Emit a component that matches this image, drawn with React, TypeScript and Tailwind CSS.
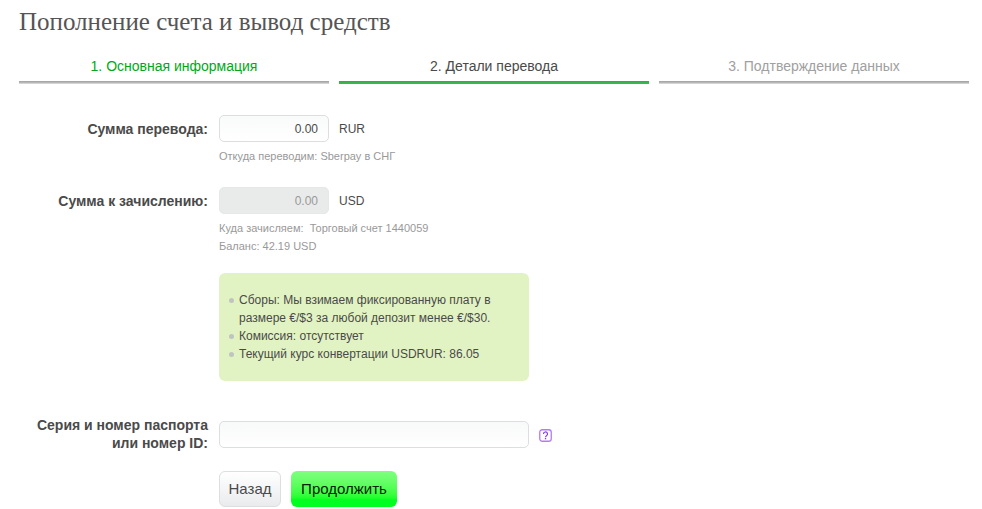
const sans = 'font-["Liberation_Sans",Arial,sans-serif]';

function Step({ label, className, lineClass }: { label: string; className: string; lineClass: string }) {
  return (
    <div className="w-[310px] shrink-0">
      <div className={`h-[29px] text-center text-[14px] leading-[16px] pt-[6px] ${className}`}>{label}</div>
      <div className={`h-[3px] ${lineClass}`} />
    </div>
  );
}

function Label({ children, className = '' }: { children: React.ReactNode; className?: string }) {
  return <div className={`w-[189px] shrink-0 text-right text-[14px] font-bold text-[#4a4a4a] ${className}`}>{children}</div>;
}

function AmountRow({ label, currency, disabled }: { label: string; currency: string; disabled?: boolean }) {
  return (
    <div className="flex items-center">
      <Label className="leading-[16px]">{label}</Label>
      <input
        readOnly
        value="0.00"
        className={`ml-[11px] w-[110px] h-[27px] rounded-[5px] border px-[10px] text-right text-[12px] outline-none ${
          disabled
            ? 'border-[#e6e8e8] bg-[#e9ebeb] text-[#999999]'
            : 'border-[#dcdee0] bg-gradient-to-b from-[#f9fafa] to-white text-[#4a4a4a]'
        }`}
      />
      <span className="ml-[10px] text-[12px] text-[#4a4a4a]">{currency}</span>
    </div>
  );
}

function Fee({ children }: { children: React.ReactNode }) {
  return (
    <li className="flex">
      <span className="mt-[7px] ml-[-10px] mr-[5px] h-[5px] w-[5px] shrink-0 rounded-full bg-[#c0c4c0]" />
      <span>{children}</span>
    </li>
  );
}

export default function App() {
  return (
    <div className={`w-[982px] h-[509px] overflow-hidden bg-white pl-[19px] pr-[13px] ${sans}`}>
      <h1 className='pt-[8px] h-[52px] text-[25px] leading-[28px] font-normal text-[#555555] font-["Liberation_Serif",serif]'>
        Пополнение счета и вывод средств
      </h1>

      <div className="flex gap-[10px]">
        <Step label="1. Основная информация" className="text-[#00a818]" lineClass="bg-gradient-to-b from-[#a8a8a8] from-33% to-[#e4e4e4]" />
        <Step label="2. Детали перевода" className="text-[#4a4a4a]" lineClass="bg-gradient-to-b from-[#28b040] to-[#40b850]" />
        <Step label="3. Подтверждение данных" className="text-[#a0a0a0]" lineClass="bg-gradient-to-b from-[#a8a8a8] from-33% to-[#e4e4e4]" />
      </div>

      <div className="pt-[31px]">
        <AmountRow label="Сумма перевода:" currency="RUR" />
        <div className="ml-[200px] mt-[5px] text-[11px] leading-[18px] text-[#999999]">Откуда переводим: Sberpay в СНГ</div>
      </div>

      <div className="pt-[22px]">
        <AmountRow label="Сумма к зачислению:" currency="USD" disabled />
        <div className="ml-[200px] mt-[5px] text-[11px] leading-[18px] text-[#999999]">
          <div className="whitespace-pre">Куда зачисляем:  Торговый счет 1440059</div>
          <div>Баланс: 42.19 USD</div>
        </div>
      </div>

      <div className="ml-[200px] mt-[18px] w-[310px] h-[108px] rounded-[6px] bg-[#e2f3c3] pl-[20px] pr-[10px] pt-[18px] text-[12px] leading-[18px] text-[#4a4a4a]">
        <ul>
          <Fee>Сборы: Мы взимаем фиксированную плату в размере €/$3 за любой депозит менее €/$30.</Fee>
          <Fee>Комиссия: отсутствует</Fee>
          <Fee>Текущий курс конвертации USDRUR: 86.05</Fee>
        </ul>
      </div>

      <div className="flex items-start mt-[40px]">
        <Label className="leading-[18px] mt-[-5px]">
          Серия и номер паспорта
          <br />
          или номер ID:
        </Label>
        <input className="ml-[11px] w-[310px] h-[27px] rounded-[5px] border border-[#dcdee0] bg-gradient-to-b from-[#f8f9f9] to-white outline-none" />
        <svg className="ml-[10px] mt-[8px]" width="13" height="13" viewBox="0 0 13 13" fill="none">
          <rect x="0.75" y="0.75" width="11.5" height="11.5" rx="2.5" stroke="#b57bf5" strokeWidth="1.3" />
          <path d="M4.5 5a2 2 0 1 1 3 1.7c-.7.4-1 .8-1 1.5" stroke="#8a3fd1" strokeWidth="1.2" />
          <rect x="5.9" y="9" width="1.3" height="1.3" fill="#8a3fd1" />
        </svg>
      </div>

      <div className="ml-[200px] mt-[19px] flex gap-[10px]">
        <button className="w-[62px] h-[36px] rounded-[6px] border border-[#dcdee0] bg-gradient-to-b from-white to-[#e9ebed] text-[15px] text-[#4a4a4a]">
          Назад
        </button>
        <button className="w-[106px] h-[36px] rounded-[6px] bg-gradient-to-b from-[#80ff80] to-[#00ff20] to-80% text-[15px] text-[#062006]">
          Продолжить
        </button>
      </div>
    </div>
  );
}
